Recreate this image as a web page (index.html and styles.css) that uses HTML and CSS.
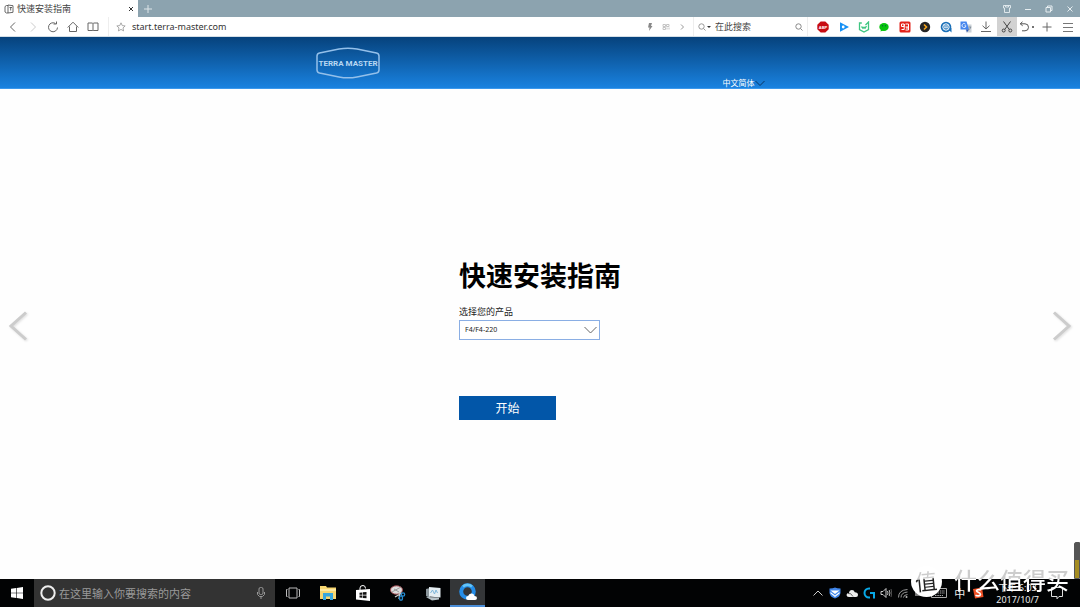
FILE: index.html
```html
<!DOCTYPE html>
<html lang="zh-CN">
<head>
<meta charset="utf-8">
<title>快速安装指南</title>
<link rel="stylesheet" href="styles.css">
</head>
<body>
<div class="tabbar">
  <div class="tab">
    <svg class="i10" viewBox="0 0 10 10"><path d="M4 1.500H2.500L1 2.500V8L2.500 9H4M4 1l5 .7v6.600L4 9zM5.500 3.500h2.500M6.700 3.500v3" stroke="#444" stroke-width=".8"/></svg>
    <span class="tab-title">快速安装指南</span>
    <button class="icon-btn" aria-label="关闭标签"><svg class="i8" viewBox="0 0 8 8"><path d="M2 2l4 4M6 2L2 6" stroke="#333"/></svg></button>
  </div>
  <button class="icon-btn new-tab" aria-label="新标签"><svg class="i10" viewBox="0 0 10 10"><path d="M5 1v8M1 5h8" stroke="#dde5e8"/></svg></button>
  <div class="window-controls">
    <button class="icon-btn" aria-label="皮肤"><svg class="i10" viewBox="0 0 10 10"><path d="M1.500 1.500h7v2.500h-1v4.500h-5V4h-1zM3.500 1.500v1.500h3V1.500" stroke="#e6edf0" stroke-width=".9"/></svg></button>
    <button class="icon-btn" aria-label="最小化"><svg class="i10" viewBox="0 0 10 10"><path d="M2 5.500h6" stroke="#e6edf0"/></svg></button>
    <button class="icon-btn" aria-label="还原"><svg class="i10" viewBox="0 0 10 10"><path d="M2 3.500h4.500V8H2zM3.500 3.500V2H8v4.500H6.500" stroke="#e6edf0"/></svg></button>
    <button class="icon-btn" aria-label="关闭"><svg class="i10" viewBox="0 0 10 10"><path d="M2.500 2.500l5 5M7.500 2.500l-5 5" stroke="#e6edf0"/></svg></button>
  </div>
</div>

<div class="toolbar">
  <div class="nav">
    <button class="icon-btn" aria-label="后退"><svg class="i12" viewBox="0 0 12 12"><path d="M8 1.500L3.500 6 8 10.500" stroke="#666"/></svg></button>
    <button class="icon-btn" aria-label="前进"><svg class="i12" viewBox="0 0 12 12"><path d="M4 1.500L8.500 6 4 10.500" stroke="#ccc"/></svg></button>
    <button class="icon-btn" aria-label="刷新"><svg class="i12" viewBox="0 0 12 12"><path d="M8.500 2.500A4.500 4.500 0 1 0 10.500 6.500M6.500 3h3V.5" stroke="#666"/></svg></button>
    <button class="icon-btn" aria-label="主页"><svg class="i12" viewBox="0 0 12 12"><path d="M.7 6.500L6 1.200l5.300 5.300M2.500 5.500v5h7v-5" stroke="#666"/></svg></button>
    <button class="icon-btn" aria-label="阅读"><svg class="i12" viewBox="0 0 12 12"><path d="M1 2h4.500l.5.500.5-.5H11v7.500H6.500L6 10l-.5-.5H1zM6 2.500V10" stroke="#666"/></svg></button>
  </div>
  <div class="address">
    <svg class="i10" viewBox="0 0 12 12"><path d="M6 1l1.500 3.300 3.500.4-2.600 2.400.7 3.600L6 8.900l-3.100 1.800.7-3.600L1 4.700l3.500-.4z" stroke="#999"/></svg>
    <input class="url" type="text" aria-label="地址" value="start.terra-master.com">
    <svg class="i8" viewBox="0 0 8 8"><path d="M3 0h3L5 3h1.500L3 8l.5-3.500H2z" fill="#888"/></svg>
    <svg class="i8" viewBox="0 0 8 8"><path d="M1 1.500h2.500v2H1zM4.500 1.500H7v2H4.500zM1 4.500h2.500v2H1zM5 4.500v2M7 4.500v2" stroke="#c4c4c4"/></svg>
    <svg class="i8" viewBox="0 0 8 8"><path d="M3 1.500L5.500 4 3 6.500" stroke="#999"/></svg>
  </div>
  <div class="search">
    <svg class="i8" viewBox="0 0 8 8"><circle cx="3.500" cy="3.500" r="2.700" stroke="#999"/><path d="M5.500 5.500l2 2" stroke="#999"/></svg>
    <svg class="caret" viewBox="0 0 4 4"><path d="M0 1h4L2 3z" fill="#333"/></svg>
    <input type="text" aria-label="搜索" placeholder="在此搜索">
    <svg class="i8" viewBox="0 0 8 8"><circle cx="3.500" cy="3.500" r="2.700" stroke="#888"/><path d="M5.500 5.500l2 2" stroke="#888"/></svg>
  </div>
  <div class="extensions">
    <button class="icon-btn" aria-label="ABP"><svg class="i12" viewBox="0 0 12 12"><path d="M3.700.5h4.600L11.700 3.800v4.500L8.300 11.500H3.700L.3 8.300V3.800z" fill="#c70d12"/><text x="6" y="7.700" text-anchor="middle" class="abp">ABP</text></svg></button>
    <button class="icon-btn" aria-label="播放"><svg class="i12" viewBox="0 0 12 12"><path d="M2 1.200L11 6 2 10.800z" fill="#1690f5"/><circle cx="5.200" cy="6" r="1.400" fill="#fff"/></svg></button>
    <button class="icon-btn" aria-label="守护"><svg class="i12" viewBox="0 0 12 12"><path d="M3.800 2H1.500V8.500L6 11l4.500-2.500V1L7.500 4M3.500 5.500L5 7.200l1-1 1 1 1.500-2" stroke="#3fc581" stroke-width="1.300"/></svg></button>
    <button class="icon-btn" aria-label="微信"><svg class="i12" viewBox="0 0 12 12"><ellipse cx="6" cy="6" rx="4.700" ry="4" fill="#08c50d"/><path d="M3 8l-.5 2.500L6 9z" fill="#08c50d"/><circle cx="4.500" cy="4.800" r=".7" fill="#064"/><circle cx="7.500" cy="4.800" r=".7" fill="#064"/></svg></button>
    <button class="icon-btn" aria-label="购物"><svg class="i12" viewBox="0 0 12 12"><rect x=".5" y=".5" width="11" height="11" rx="1.500" fill="#e2231a"/><path d="M5.200 3H2.500v2.500h2.700V3v5.500H2.500M6.500 3h3v6h-3M6.500 6h3M8 6v2" stroke="#fff"/></svg></button>
    <button class="icon-btn" aria-label="扩展"><svg class="i12" viewBox="0 0 12 12"><circle cx="6" cy="6" r="5.200" fill="#262626"/><path d="M5 3.500L7.500 6 5 8.500" stroke="#f7a61c" stroke-width="1.600"/></svg></button>
    <button class="icon-btn" aria-label="搜图"><svg class="i12" viewBox="0 0 12 12"><circle cx="6" cy="6" r="5.300" fill="#1b70b8"/><path d="M7 7h4.500v4.500z" fill="#1b70b8"/><circle cx="6" cy="6" r="3.200" stroke="#fff"/><path d="M4 5h4M4 6.800h4" stroke="#fff"/></svg></button>
    <button class="icon-btn" aria-label="翻译"><svg class="i12" viewBox="0 0 12 12"><path d="M5 3.500h6.500v8H6z" fill="#ccd2d8"/><path d="M.5.5h6l2.500 8H.5z" fill="#4485ee"/><path d="M6 8.500h3l-2 2.800z" fill="#2855b5"/><path d="M5.500 3.200A2 2 0 1 0 6 4.800H4.500" stroke="#fff" stroke-width=".8"/><path d="M8.500 6h2.800M10.500 6c0 1.500-1 2.500-2 3" stroke="#7a8894" stroke-width=".8"/></svg></button>
    <button class="icon-btn" aria-label="下载"><svg class="i12" viewBox="0 0 12 12"><path d="M6 .5v7.500M2.500 4.700L6 8l3.500-3.300M1 10.500h10" stroke="#666"/></svg></button>
    <button class="icon-btn active" aria-label="截图"><svg class="i12" viewBox="0 0 12 12"><path d="M2.500.5l5.800 8M9.500.5l-5.800 8" stroke="#444"/><circle cx="2.700" cy="9.500" r="1.500" stroke="#444"/><circle cx="9.300" cy="9.500" r="1.500" stroke="#444"/></svg></button>
    <button class="icon-btn" aria-label="撤销"><svg class="undo" viewBox="0 0 16 12"><path d="M3.500.8L1.200 2.800l2.500 2M1.500 2.800h4.500a3.500 3.500 0 0 1 0 7H3" stroke="#555"/><circle cx="14" cy="6" r="1" fill="#444"/></svg></button>
    <button class="icon-btn" aria-label="添加"><svg class="i12" viewBox="0 0 12 12"><path d="M6 1.500v9M1.500 6h9" stroke="#666"/></svg></button>
    <button class="icon-btn" aria-label="菜单"><svg class="i12" viewBox="0 0 12 12"><path d="M1 2.500h10M1 6.500h10M1 10.500h10" stroke="#777"/></svg></button>
  </div>
</div>

<header class="site-header">
  <div class="header-inner">
    <svg class="logo" viewBox="0 0 64 32" role="img" aria-label="Terra Master">
      <path d="M3.500 6L23 2Q32 .3 41 2L60.500 6Q63 6.600 63 9v14q0 2.400-2.500 3L41 30Q32 31.700 23 30L3.500 26Q1 25.400 1 23V9q0-2.400 2.500-3z" stroke="#94c0ea" stroke-width="1.500"/>
      <text x="32" y="19" text-anchor="middle" class="logo-text">TERRA MASTER</text>
    </svg>
    <button class="language">中文简体<svg viewBox="0 0 10 7"><path d="M.5 1L5 5.500 9.500 1" stroke="#0b3462"/></svg></button>
  </div>
</header>

<main>
  <button class="slide" aria-label="上一页"><svg viewBox="0 0 20 30"><path d="M18 1.500L3 15l15 13.500" stroke="#ccc" stroke-width="3"/></svg></button>
  <form class="guide">
    <h1>快速安装指南</h1>
    <label for="product">选择您的产品</label>
    <div class="select-box">
      <select id="product"><option>F4/F4-220</option></select>
      <svg viewBox="0 0 13 8"><path d="M.5 1L6.500 7l6-6" stroke="#666"/></svg>
    </div>
    <button class="start" type="button">开始</button>
  </form>
  <button class="slide" aria-label="下一页"><svg viewBox="0 0 20 30"><path d="M2 1.500L17 15 2 28.500" stroke="#ccc" stroke-width="3"/></svg></button>
</main>

<footer class="taskbar">
  <button class="icon-btn start-menu" aria-label="开始菜单"><svg class="i12" viewBox="0 0 12 12"><path d="M0 1.700l5.200-.7v4.700H0zM5.800.9L12 0v5.700H5.800zM0 6.300h5.200V11L0 10.300zM5.800 6.300H12V12l-6.200-.9z" fill="#fff"/></svg></button>
  <div class="cortana">
    <svg class="i16" viewBox="0 0 16 16"><circle cx="8" cy="8" r="6.700" stroke="#eee" stroke-width="2"/></svg>
    <input type="text" aria-label="搜索" placeholder="在这里输入你要搜索的内容">
    <svg class="i12" viewBox="0 0 12 12"><rect x="4" y=".5" width="4" height="7" rx="1.500" stroke="#999"/><path d="M2.500 5v2.500l2 2h3l2-2V5M6 9.500V12" stroke="#999"/></svg>
  </div>
  <div class="apps">
    <button class="icon-btn" aria-label="任务视图"><svg class="i16" viewBox="0 0 16 16"><path d="M4 3h8v10H4zM2.500 4.500h-1v7h1M13.500 4.500h1v7h-1" stroke="#bbb"/></svg></button>
    <button class="icon-btn" aria-label="文件"><svg class="i16" viewBox="0 0 16 16"><path d="M0 1h6l1 1.500h9V14H0z" fill="#f8d771"/><path d="M0 4h16v2H0z" fill="#ffe9a0"/><path d="M3 15V8h10v7h-3v-3.500H6V15z" fill="#38a7df"/></svg></button>
    <button class="icon-btn" aria-label="商店"><svg class="i16" viewBox="0 0 16 16"><path d="M1 5l14-1v12L1 14.500z" fill="#fff"/><path d="M5 5V3q0-2.500 3-2.500 2.500 0 2.500 3" stroke="#fff"/><path d="M4.500 7.700l2.700-.3v2.400H4.500zM7.800 7.300l3.700-.4v2.900H7.800zM4.500 10.400h2.700v2.400l-2.700-.3zM7.800 10.400h3.700v2.900l-3.700-.4z" fill="#111"/></svg></button>
    <button class="icon-btn" aria-label="截图工具"><svg class="i16" viewBox="0 0 16 16"><ellipse cx="6.500" cy="5" rx="6" ry="4.200" fill="#ddd" stroke="#a34c52"/><path d="M2 7l9-5M4 4l5 3" stroke="#999"/><path d="M5 12l7-4M9 14l1-7" stroke="#ccc" stroke-width="1.300"/><circle cx="13" cy="9.500" r="1.700" stroke="#258bd0" stroke-width="1.300"/><ellipse cx="11" cy="13" rx="1.500" ry="2.200" stroke="#258bd0" stroke-width="1.300"/></svg></button>
    <button class="icon-btn" aria-label="监视器"><svg class="i16" viewBox="0 0 16 16"><path d="M1 4l4-1v10l-4-2z" fill="#8b969c"/><path d="M4 2l11.500 1v9.500L4 11.500z" fill="#e4edf2"/><path d="M5.500 8l2-3 2 4 1.500-4 1.500 3" stroke="#7fb6da"/><path d="M1 12l13 .5v2l-7 1z" fill="#b8c3c9"/></svg></button>
    <button class="icon-btn running" aria-label="QQ浏览器"><svg class="i18" viewBox="0 0 18 18"><circle cx="8.500" cy="8.500" r="6.300" stroke="#258ee9" stroke-width="4"/><path d="M4 3.500a7 7 0 0 1 9 0" stroke="#63c4f7" stroke-width="2.500"/><path d="M9 17q-2 0-2-2t2.200-2q.8-3 3.800-2.500 2 .3 2.500 2.500 2.500 0 2.500 2t-2 2z" fill="#fff"/></svg></button>
  </div>
  <div class="tray">
    <svg class="i12" viewBox="0 0 12 12"><path d="M1.500 8.500L6 4l4.500 4.500" stroke="#ccc"/></svg>
    <svg class="i12" viewBox="0 0 12 12"><path d="M.5 1.500Q4 1.500 6 .5 8 1.500 11.500 1.500V6q-.5 4-5.500 5.500Q1 10 .5 6z" fill="#4187eb"/><path d="M1.500 3.500H10.500L6 7zM1.500 5L6 8.500 10.500 5v1.500L6 10 1.500 6.500z" fill="#fff"/></svg>
    <svg class="i12" viewBox="0 0 12 12"><path d="M3 10Q.5 10 .5 8T3 6q.3-3 3-3 2 0 2.800 2.300Q12 5.500 12 8q0 2-2 2z" fill="#eee"/><path d="M2 6.500q3-1 5 3" stroke="#111" stroke-width=".6"/></svg>
    <svg class="i12" viewBox="0 0 12 12"><path d="M7 1.500H6a4.500 4.500 0 0 0 0 9h1M7 6h4v5.500" stroke="#08a8e6" stroke-width="2"/></svg>
    <svg class="i12" viewBox="0 0 12 12"><path d="M1 4.500h2l3-3v9l-3-3H1z" stroke="#ccc"/><path d="M7.500 4q1 2 0 4M9.200 3q1.500 3 0 6" stroke="#bbb"/><path d="M11 2q1.500 4 0 8" stroke="#555"/></svg>
    <svg class="i12" viewBox="0 0 12 12"><path d="M1.500 10.500q0-7.500 9-8M4 10.500q0-5 6.500-5.500M6.500 10.500q0-2.500 4-3" stroke="#999"/><circle cx="9.500" cy="10" r="1" fill="#bbb"/></svg>
    <svg class="i12" viewBox="0 0 12 12"><path d="M1 4h9v5H1z" fill="#777"/><path d="M10 5.500h1.500v2H10" stroke="#777"/></svg>
    <svg class="keyboard" viewBox="0 0 16 10"><path d="M.5.500h15v9H.5z" stroke="#aaa"/><path d="M2 3h12M2 5h12M4 7.500h8" stroke="#aaa" stroke-dasharray="1.500 .8"/></svg>
    <span class="ime">中</span>
    <svg class="i12" viewBox="0 0 12 12"><path d="M1 2l9-1.500L11.500 10 3 11.500z" fill="#f05025"/><path d="M9 3q-4-1-4.500.8C4.500 5.500 8.500 5 8.500 7.500 8 9.500 5 9 3.500 8.200" stroke="#fff" stroke-width="1.600"/></svg>
    <div class="clock"><span>下午 6:03</span><span>2017/10/7</span></div>
    <svg class="i14" viewBox="0 0 14 14"><path d="M1.500 1.500h11v9H9l-2 2.300V10.500H1.500z" stroke="#ddd"/></svg>
  </div>
</footer>

<div class="meter"></div>
<div class="watermark"><span class="watermark-badge"><span>值</span></span><span class="watermark-name">什么值得买</span></div>
</body>
</html>
```

FILE: styles.css
```css
* { box-sizing: border-box; }
body {
  margin: 0;
  height: 100vh;
  display: flex;
  flex-direction: column;
  position: relative;
  overflow: hidden;
  background: #fefefe;
  color: #222;
  font-family: "Noto Sans", "Noto Sans CJK SC", sans-serif;
}
svg { display: block; fill: none; flex: none; }
button, input, select { font: inherit; color: inherit; border: 0; padding: 0; margin: 0; background: none; }
input { min-width: 0; outline: 0; }
.icon-btn { display: flex; align-items: center; justify-content: center; }
.i8 { width: 8px; height: 8px; }
.i10 { width: 10px; height: 10px; }
.i12 { width: 12px; height: 12px; }
.i14 { width: 14px; height: 14px; }
.i16 { width: 16px; height: 16px; }
.i18 { width: 18px; height: 18px; }

.tabbar { display: flex; height: 17px; background: #8ca3af; }
.tab { display: flex; align-items: center; gap: 3px; width: 138px; padding: 0 3px 0 4px; background: #fff; font-size: 9px; line-height: 16px; }
.tab-title { flex: 1; color: #444; }
.new-tab { width: 20px; }
.window-controls { display: flex; margin-left: auto; }
.window-controls .icon-btn { width: 21px; }

.toolbar { display: flex; align-items: stretch; height: 20px; background: #fff; padding-right: 2px; border-bottom: 1px solid #d4dfe7; }
.nav { display: flex; padding: 0 5px 0 3px; border-right: 1px solid #eee; }
.nav .icon-btn { width: 20px; }
.address { display: flex; flex: 1; align-items: center; gap: 8px; padding: 0 7px 0 7px; border-right: 1px solid #eee; }
.url { flex: 1; margin-left: -2px; font-size: 9px; line-height: 16px; color: #333; }
.search { display: flex; align-items: center; gap: 1px; width: 113px; padding: 0 4px; }
.caret { width: 4px; height: 4px; }
.search input { flex: 1; margin-left: 3px; font-size: 9px; line-height: 16px; }
.search input::placeholder { color: #444; opacity: 1; }
.extensions { display: flex; width: 271px; padding-left: 5px; border-left: 1px solid #eee; }
.extensions .icon-btn { flex: 1; }
.extensions .active { background: #d2d2d2; }
.undo { width: 16px; height: 12px; }
.abp { font: bold 4px "Liberation Sans", sans-serif; fill: #fff; }

.site-header { height: 52px; background: linear-gradient(#06427c, #1982e0); border-bottom: 1px solid #3b98ec; }
.header-inner { display: flex; justify-content: space-between; width: 449px; height: 100%; margin: 0 auto; }
.logo { width: 64px; height: 32px; margin-top: 10px; }
.logo-text { font: bold 8px Roboto, sans-serif; fill: #b8d7f2; }
.language { display: flex; align-items: center; align-self: flex-end; color: #fff; font-size: 8px; line-height: 10px; }
.language svg { width: 10px; height: 7px; }

main { display: flex; flex: 1; align-items: center; justify-content: space-between; padding: 0 8px 16px; }
.slide svg { width: 20px; height: 30px; filter: drop-shadow(1px 1px 1px #ddd); }
.guide { display: flex; flex-direction: column; align-items: flex-start; padding-top: 25px; }
h1 { margin: 0; color: #000; font-size: 27px; font-weight: 700; line-height: 36px; }
.guide label { margin-top: 11px; font-size: 9px; line-height: 14px; }
.select-box { position: relative; width: 141px; margin-top: 1px; }
.select-box select { display: block; width: 100%; height: 20px; padding: 0 5px; border: 1px solid #8aaee4; background: #fff; font-size: 7px; appearance: none; }
.select-box svg { position: absolute; top: 6px; right: 3px; width: 13px; height: 8px; pointer-events: none; }
.start { width: 97px; height: 24px; margin-top: 56px; background: #0256a8; color: #fff; font-size: 12px; }

.taskbar { display: flex; height: 28px; background: #020304; color: #eee; }
.start-menu { width: 34px; }
.cortana { display: flex; align-items: center; gap: 3px; width: 241px; padding: 0 8px 0 6px; background: #333; }
.cortana input { flex: 1; font-size: 11px; }
.cortana input::placeholder { color: #999; opacity: 1; }
.apps { display: flex; }
.apps .icon-btn { width: 35px; }
.apps .running { background: #343638; border-bottom: 2px solid #4b8ed8; }
.tray { display: flex; align-items: center; gap: 5px; margin-left: auto; padding-right: 16px; }
.keyboard { width: 16px; height: 10px; }
.ime { padding: 0 2px; font-size: 11px; }
.clock { display: flex; flex-direction: column; align-items: center; padding: 2px 6px 0 7px; font-size: 9px; line-height: 12px; }

.meter { position: absolute; right: 0; bottom: 28px; width: 6px; height: 37px; border: 1px solid #555; border-radius: 2px 0 0 0; background: linear-gradient(#555 50%, #a58d22 50%); }
.watermark { position: absolute; right: 11px; bottom: 10px; display: flex; align-items: flex-start; gap: 12px; pointer-events: none; }
.watermark-badge { display: flex; align-items: center; justify-content: center; width: 31px; height: 31px; border-radius: 50%; background: #fff; font-size: 22px; line-height: 31px; }
.watermark-badge span { background: linear-gradient(#ccc 42%, #222 42%); background-clip: text; color: transparent; transform: rotate(-6deg); }
.watermark-name { background: linear-gradient(#ccc 46%, #fff 46%); background-clip: text; color: transparent; font-size: 23px; font-weight: 500; line-height: 28px; }
```
